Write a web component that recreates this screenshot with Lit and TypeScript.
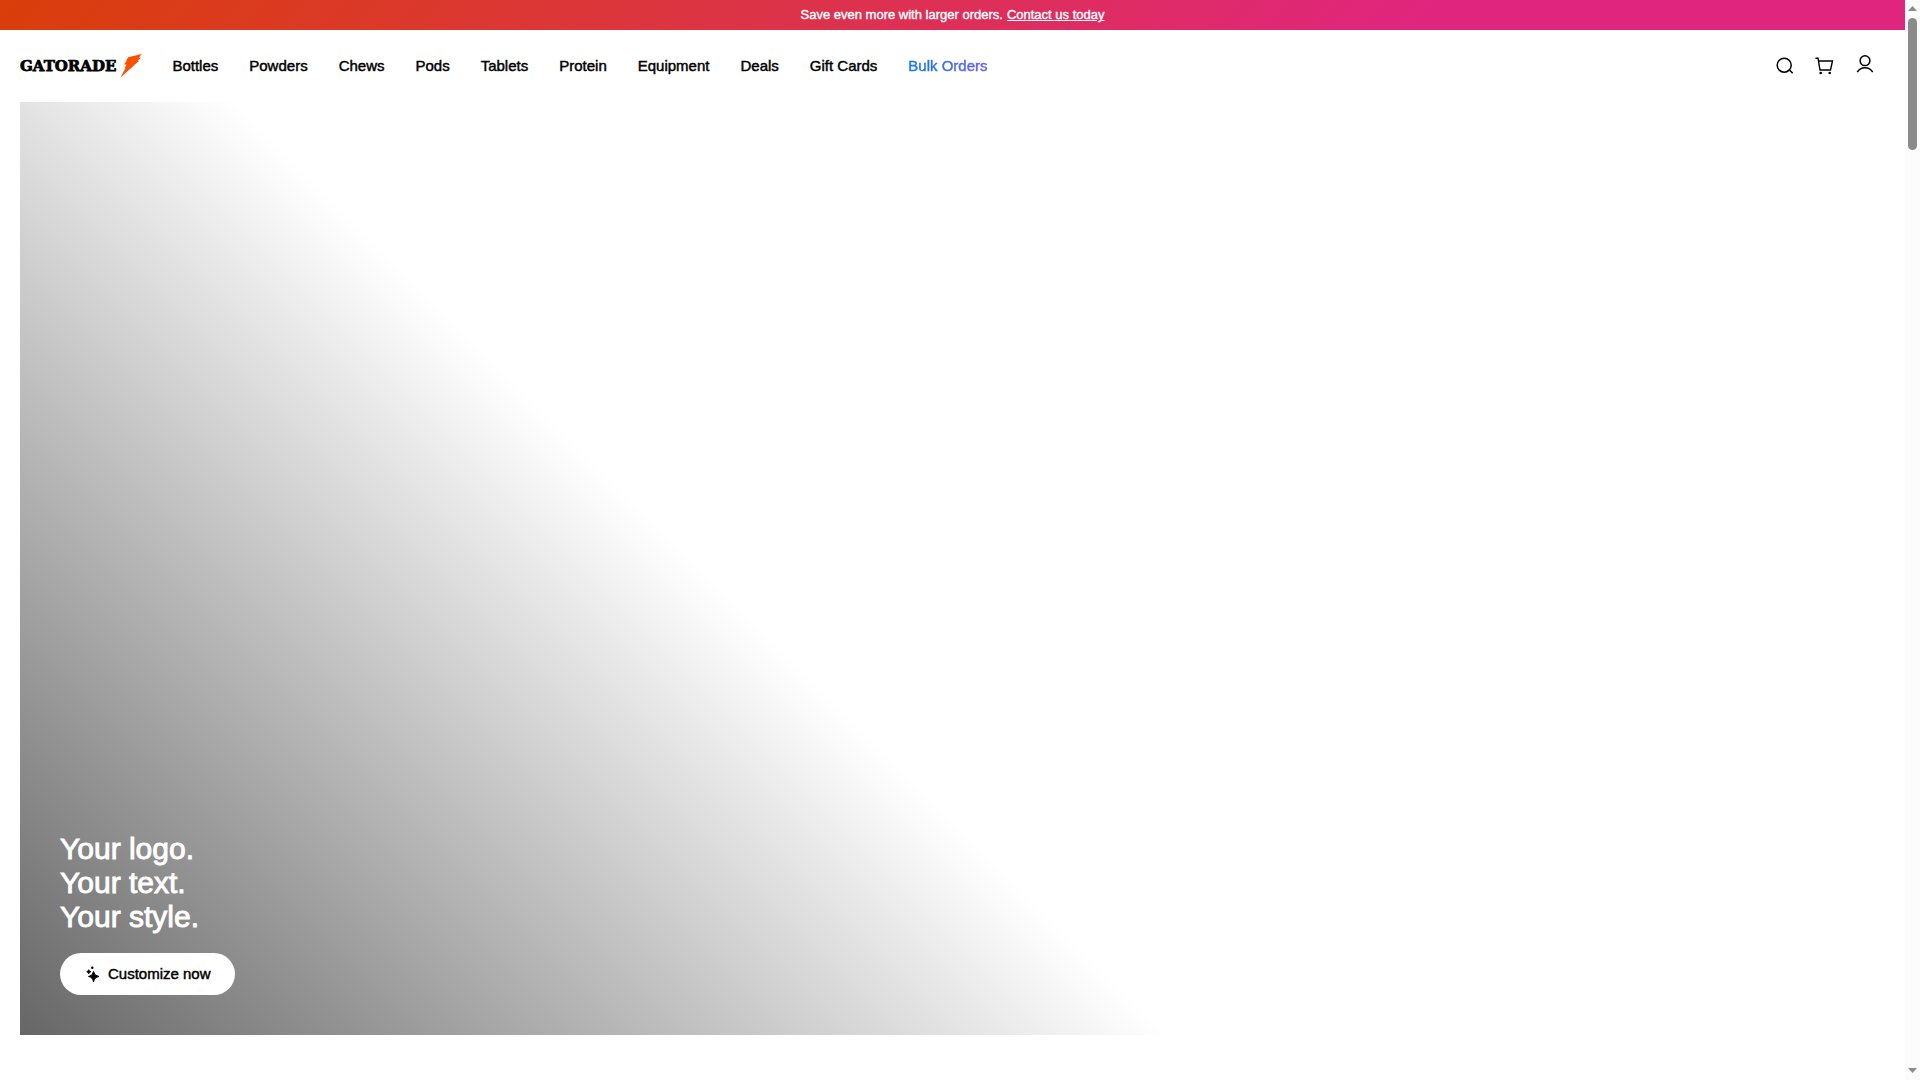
import { LitElement, html, css } from "lit";
import { customElement } from "lit/decorators.js";

const LINKS = ["Bottles", "Powders", "Chews", "Pods", "Tablets", "Protein", "Equipment", "Deals", "Gift Cards"];

@customElement("app-root")
export class AppRoot extends LitElement {
  static styles = css`
    :host {
      display: flex;
      min-height: 100vh;
      background: #fff;
      color: #000;
      font-family: "Liberation Sans", Arial, sans-serif;
      font-size: 15px;
      line-height: 20px;
    }
    .page {
      flex: 1;
      min-width: 0;
      display: flex;
      flex-direction: column;
    }
    .banner {
      display: flex;
      justify-content: center;
      gap: 4px;
      padding: 5px 20px;
      background: linear-gradient(135deg, #da3e0a 0%, #dc3444 38%, #e0257f 75%);
      color: #fff;
      font-size: 13px;
      -webkit-text-stroke: 0.03em currentColor;
    }
    .banner a {
      color: inherit;
      text-underline-offset: 1px;
    }
    .header {
      display: flex;
      align-items: center;
      gap: 29px;
      padding: 0 28px 0 20px;
      height: 72px;
    }
    .logo {
      display: flex;
      align-items: center;
      gap: 3px;
      color: #000;
      text-decoration: none;
      font: bold 15px/20px "DejaVu Serif", serif;
      -webkit-text-stroke: 0.05em currentColor;
    }
    .nav {
      display: flex;
      flex: 1;
      gap: 31px;
      -webkit-text-stroke: 0.03em currentColor;
    }
    .nav a {
      color: inherit;
      text-decoration: none;
      white-space: nowrap;
    }
    .nav .bulk {
      background: linear-gradient(90deg, #0f7ae5, #6a5cf0);
      background-clip: text;
      -webkit-background-clip: text;
      color: transparent;
    }
    .tools {
      display: flex;
      gap: 16px;
    }
    .tools button {
      display: flex;
      padding: 0;
      border: 0;
      background: none;
      color: inherit;
    }
    .hero {
      flex: 1;
      display: flex;
      flex-direction: column;
      justify-content: flex-end;
      align-items: flex-start;
      gap: 19px;
      margin: 0 20px 45px;
      padding: 40px;
      background: linear-gradient(45deg, rgba(0, 0, 0, 0.6), transparent 41%);
    }
    h1 {
      margin: 0;
      color: #fff;
      font-size: 30px;
      line-height: 34px;
      font-weight: 400;
      -webkit-text-stroke: 0.03em currentColor;
    }
    .cta {
      display: flex;
      align-items: center;
      gap: 8px;
      height: 42px;
      padding: 0 24px;
      border: 0;
      border-radius: 21px;
      background: #fff;
      color: #000;
      font: inherit;
      -webkit-text-stroke: 0.03em currentColor;
    }
    .scroll {
      display: flex;
      flex-direction: column;
      align-items: center;
      width: 15px;
      background: #fcfcfc;
    }
    .thumb {
      width: 9px;
      height: 132px;
      margin-bottom: auto;
      border-radius: 5px;
      background: #8b8b8b;
    }
    .scroll svg {
      fill: #8b8b8b;
    }
  `;

  render() {
    return html`
      <div class="page">
        <div class="banner">
          <span>Save even more with larger orders.</span>
          <a href="#contact">Contact us today</a>
        </div>
        <header class="header">
          <a class="logo" href="#home">
            <span>GATORADE</span>
            <svg width="24" height="26" viewBox="0 0 24 26" aria-hidden="true">
              <path fill="#ff5000" d="M22.700 1 9.300 4.300 7 7.700 7.800 7.800 5 11.300 7.500 11.700 5.600 15 6.500 15 1.300 24.700 16 11.500 20 8 18.500 8 22 4.800 20 4.500Z" />
            </svg>
          </a>
          <nav class="nav">
            ${LINKS.map((l) => html`<a href="#shop">${l}</a>`)}
            <a class="bulk" href="#bulk">Bulk Orders</a>
          </nav>
          <div class="tools">
            <button aria-label="Search">
              <svg width="24" height="24" viewBox="0 0 24 24" fill="none" stroke="#000" stroke-width="1.500">
                <circle cx="11.200" cy="11.200" r="7" />
                <path d="m16 15.500 3.700 3.700" />
              </svg>
            </button>
            <button aria-label="Cart">
              <svg width="24" height="24" viewBox="0 0 24 24" fill="none" stroke="#000" stroke-width="1.400">
                <path d="M2.500 4.200H5L7 16H17.500L19.500 7H5.500" />
                <circle cx="7.700" cy="19" r="1.300" fill="#000" stroke="none" />
                <circle cx="16.700" cy="19" r="1.300" fill="#000" stroke="none" />
              </svg>
            </button>
            <button aria-label="Account">
              <svg width="24" height="24" viewBox="0 0 24 24" fill="none" stroke="#000" stroke-width="1.500">
                <circle cx="12" cy="6.700" r="4.900" />
                <path d="M4.300 18.200C6 15.200 8.600 13.700 12 13.700s6 1.500 7.700 4.500" />
              </svg>
            </button>
          </div>
        </header>
        <main class="hero">
          <h1>Your logo.<br />Your text.<br />Your style.</h1>
          <button class="cta">
            <svg width="16" height="18" viewBox="0 0 16 18" aria-hidden="true">
              <path d="M9.500 6.500Q10.300 11 15 11.500 10.300 12.200 9.500 17 8.800 12.200 4.500 11.500 8.800 11 9.500 6.500Z" stroke="#000" stroke-width="1" />
              <path d="M4.700 4.700Q5.200 6.300 7 6.700 5.200 7.200 4.700 8.800 4.300 7.200 2.700 6.700 4.300 6.300 4.700 4.700Z" stroke="#000" stroke-width=".8" />
              <circle cx="8.300" cy="2.800" r="1.200" />
            </svg>
            Customize now
          </button>
        </main>
      </div>
      <div class="scroll" aria-hidden="true">
        <svg width="15" height="18" viewBox="0 0 15 18"><path d="M7.500 6 12 11H3Z" /></svg>
        <div class="thumb"></div>
        <svg width="15" height="18" viewBox="0 0 15 18"><path d="M7.500 11 12 6H3Z" /></svg>
      </div>
    `;
  }
}
